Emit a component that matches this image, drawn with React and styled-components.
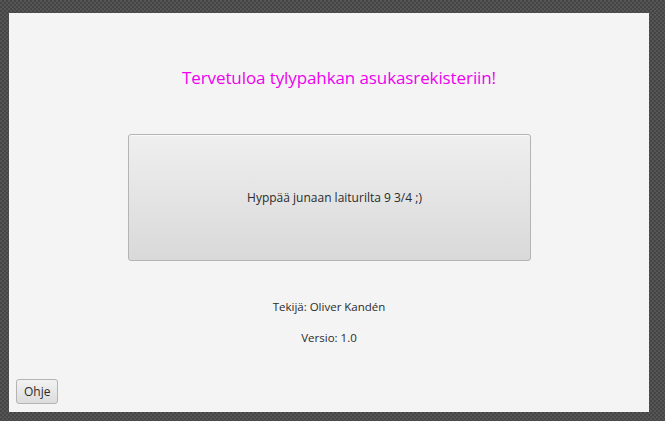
import React from 'react';
import styled, { createGlobalStyle } from 'styled-components';

const Global = createGlobalStyle`
  html, body {
    margin: 0;
    padding: 0;
    height: 100%;
  }
  body {
    background-color: #4c4c4c;
    background-image: repeating-conic-gradient(#454545 0 25%, #555555 0 50%);
    background-size: 4px 4px;
    font-family: "Open Sans", "Noto Sans", sans-serif;
  }
`;

const Window = styled.div`
  box-sizing: border-box;
  margin: 13px 0 0 9px;
  width: 640px;
  height: 399px;
  background: #f4f4f4;
  display: flex;
  flex-direction: column;
  align-items: center;
  padding: 0 7px 8px 7px;
`;

const Title = styled.h1`
  margin: 53px 0 0 20px;
  font-weight: 400;
  font-size: 17px;
  line-height: 24px;
  color: #ee00ee;
  letter-spacing: -0.1px;
`;

const BigButton = styled.button`
  box-sizing: border-box;
  margin-top: 44px;
  width: 403px;
  height: 127px;
  border: 1px solid #b4b4b4;
  border-radius: 3px;
  background: linear-gradient(#efefef, #d9d9d9);
  box-shadow: inset 0 1px 0 #fafafa;
  font-family: inherit;
  font-size: 12px;
  color: #2b2b2b;
  padding: 0 0 0 11px;
  cursor: pointer;
`;

const Info = styled.div`
  margin-top: 38px;
  display: flex;
  flex-direction: column;
  align-items: center;
  gap: 15px;
  font-size: 11.5px;
  line-height: 16px;
  color: #2b2b2b;
`;

const Footer = styled.div`
  margin-top: auto;
  align-self: stretch;
  display: flex;
`;

const SmallButton = styled.button`
  box-sizing: border-box;
  height: 25px;
  padding: 0 7px;
  border: 1px solid #b4b4b4;
  border-radius: 3px;
  background: linear-gradient(#f2f2f2, #dcdcdc);
  font-family: inherit;
  font-size: 12px;
  color: #2b2b2b;
  cursor: pointer;
`;

export default function App() {
  return (
    <>
      <Global />
      <Window>
        <Title>Tervetuloa tylypahkan asukasrekisteriin!</Title>
        <BigButton>Hyppää junaan laiturilta 9 3/4 ;)</BigButton>
        <Info>
          <span>Tekijä: Oliver Kandén</span>
          <span>Versio: 1.0</span>
        </Info>
        <Footer>
          <SmallButton>Ohje</SmallButton>
        </Footer>
      </Window>
    </>
  );
}
